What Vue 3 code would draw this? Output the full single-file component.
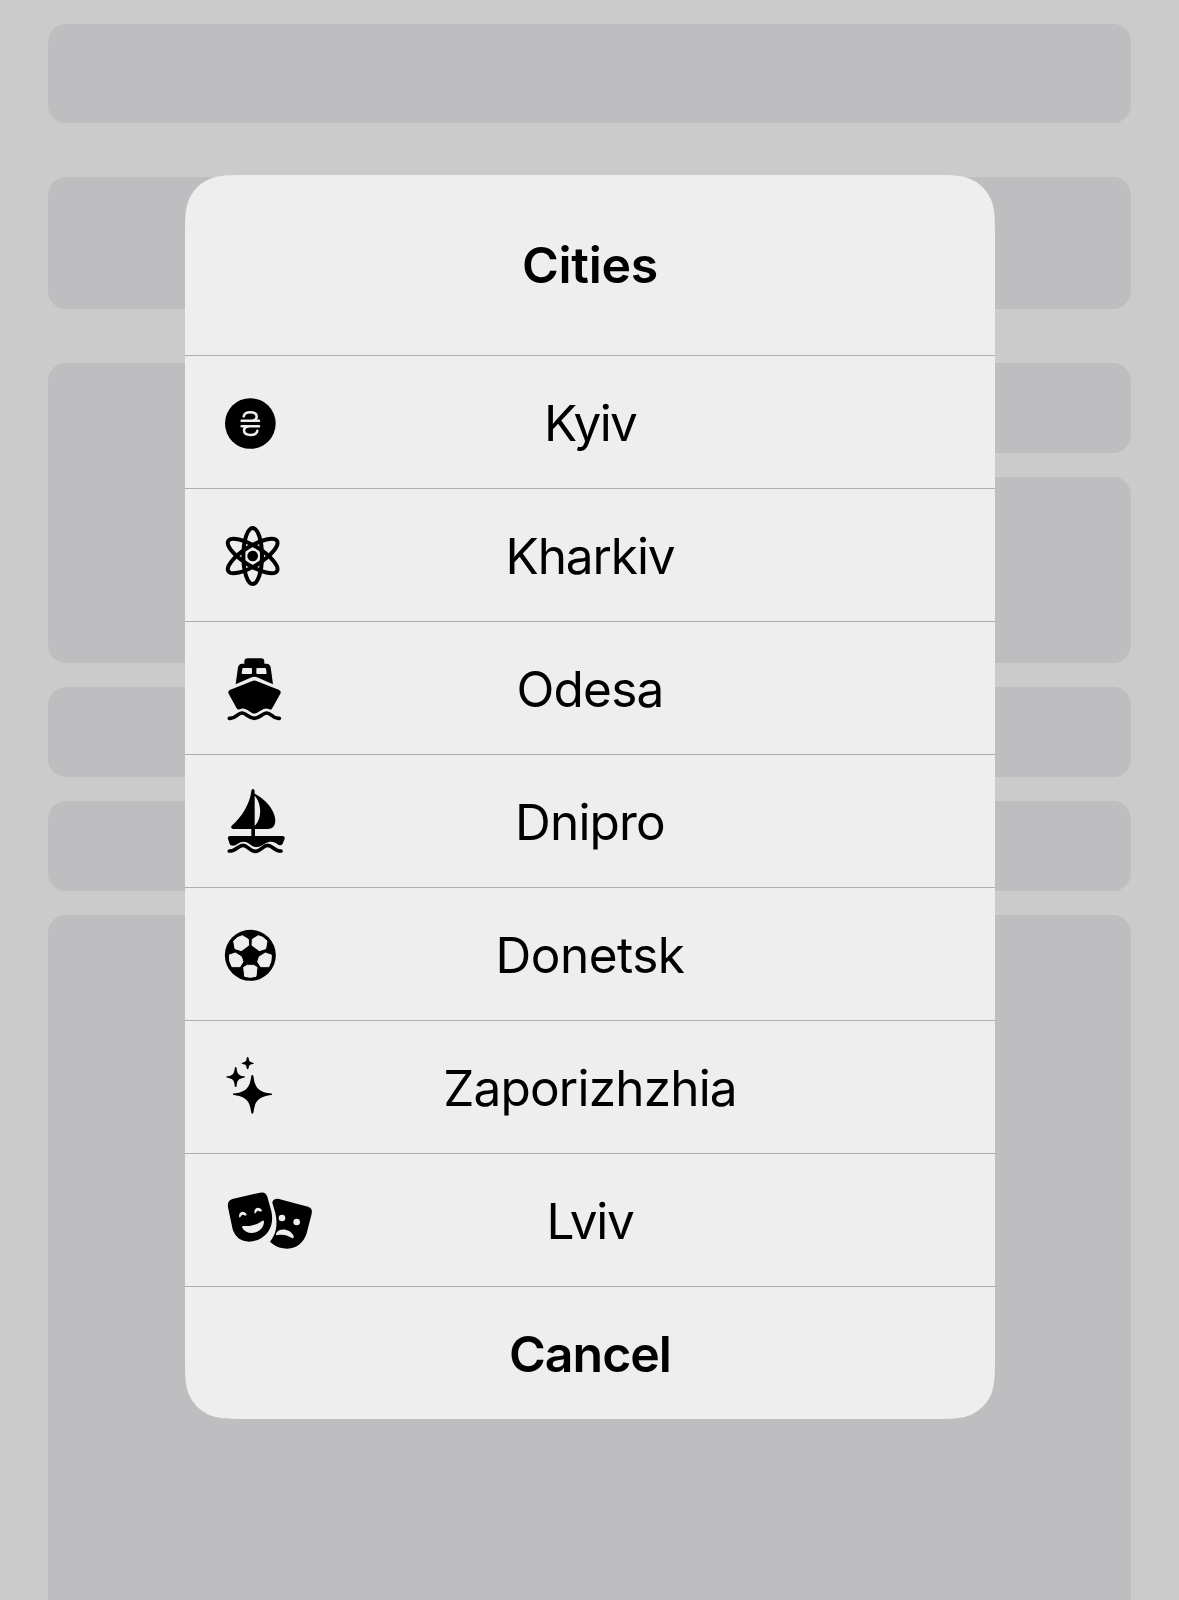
<script setup>
const cities = [
  { name: 'Kyiv', icon: 'hryvnia', view: '0 -87 240 396', tracking: '-1.7px' },
  { name: 'Kharkiv', icon: 'atom', view: '0 -78 240 396', tracking: '-1.1px' },
  { name: 'Odesa', icon: 'ferry', view: '0 -78 240 396', tracking: '-0.75px' },
  { name: 'Dnipro', icon: 'sailboat', view: '0 -75 240 396', tracking: '-0.8px' },
  { name: 'Donetsk', icon: 'football', view: '0 -81 240 396', tracking: '-0.5px' },
  { name: 'Zaporizhzhia', icon: 'sparkles', view: '0 -81 240 396', tracking: '-0.8px' },
  { name: 'Lviv', icon: 'masks', view: '-15 -78 315 396', tracking: '-1.35px' },
]
</script>

<template>
  <div class="screen">
    <div class="backdrop">
      <div class="card search"></div>
      <div class="card banner"></div>
      <div class="split">
        <div class="card"></div>
        <div class="stack">
          <div class="card short"></div>
          <div class="card rest"></div>
        </div>
      </div>
      <div class="card short gap"></div>
      <div class="card short gap"></div>
      <div class="card tall gap"></div>
    </div>

    <div class="alert" role="dialog">
      <h1 class="title">Cities</h1>
      <button v-for="c in cities" :key="c.name" class="row">
        <svg class="icon" :class="{ wide: c.icon === 'masks' }" :viewBox="c.view">
          <g v-if="c.icon === 'hryvnia'">
            <circle cx="106" cy="115.500" r="76" />
            <g class="line light">
              <path d="M86 94C88 86 95 82 105 82C117 82 125 87 125 95C125 101 121 105 114 107" />
              <path d="M99 124C91 126 87 130 87 136C87 145 95 150 107 150C118 150 125 146 127 137" />
              <path d="M80 107.500H132M80 124H132" />
            </g>
          </g>
          <g v-else-if="c.icon === 'atom'">
            <g class="line orbit">
              <ellipse cx="113" cy="123" rx="28" ry="84" />
              <ellipse cx="113" cy="123" rx="29" ry="86" transform="rotate(58 113 123)" />
              <ellipse cx="113" cy="123" rx="29" ry="86" transform="rotate(-58 113 123)" />
            </g>
            <circle cx="113" cy="123" r="16" />
          </g>
          <g v-else-if="c.icon === 'ferry'">
            <path fill-rule="evenodd" d="M62 109L69 58Q71 48 81 47H88V41Q88 31 98 31H138Q148 31 148 41V47H155Q165 48 167 58L174 109L126 88Q118 84 110 88ZM85 60Q82 60 82 63L80 75Q80 78 83 78H108Q111 78 111 75V63Q111 60 108 60ZM127 60Q124 60 124 63V75Q124 78 127 78H152Q155 78 155 75L153 63Q153 60 150 60Z" />
            <path d="M112 99Q118 96 124 99L191 125Q200 129 196 137L172 180Q169 187 163 184Q151 178 140 186L125 195Q118 198 111 195L97 186Q86 178 74 184Q68 186 65 181L41 137Q37 129 46 125Z" />
            <path class="line wave" d="M43 211C62 214 68 194 81 195C95 196 101 211 118 211C135 211 141 196 155 195C168 194 174 214 193 211" />
          </g>
          <g v-else-if="c.icon === 'sailboat'">
            <path fill-rule="evenodd" d="M109 33Q109 27 114 27Q118 27 119 34V41C147 54 181 89 181 122Q181 146 157 147H120V168H109V147H54Q45 145 50 137C81 111 105 70 109 33ZM119 47V138C143 113 139 69 119 47Z" />
            <path d="M45 168H202Q211 168 209 176L203 191Q199 198 191 195C175 182 162 184 152 190C139 198 133 202 122 201C108 200 101 185 86 185C72 184 66 197 53 197Q46 197 44 192L39 176Q37 168 45 168Z" />
            <path class="line wave" d="M43 213C61 215 70 196 84 196C98 196 104 214 121 214C138 214 144 196 158 196C172 196 180 215 198 213" />
          </g>
          <g v-else-if="c.icon === 'football'">
            <circle cx="106" cy="121" r="76.500" />
            <g class="patch">
              <path d="M82 62L100 73L101 91L79 107L60 101L56 78Q67 65 82 62Z" />
              <path d="M130 62L112 73L111 91L133 107L152 101L156 78Q145 65 130 62Z" />
              <path d="M43 120L61 114L79 125L84 140L75 155L51 155Q42 142 43 120Z" />
              <path d="M169 120L151 114L133 125L128 140L137 155L161 155Q170 142 169 120Z" />
              <path d="M86 157L96 151H116L126 157L123 184Q106 190 89 184Z" />
            </g>
          </g>
          <g v-else-if="c.icon === 'sparkles'">
            <path d="M112 81C115 81 115 83 116 89C120 117 130 131 163 136C170 137 171 137 171 139C171 141 170 141 163 142C130 147 120 161 116 189C115 195 115 197 112 197C109 197 109 195 108 189C104 161 94 147 61 142C55 141 54 141 54 139C54 137 55 137 61 136C94 131 104 117 108 89C109 83 109 81 112 81Z" />
            <path d="M62 57C65 57 65 60 65 63C67 77 70 82 86 85Q91 86 91 87Q91 88 86 89C70 92 67 97 65 111C65 114 65 117 62 117C59 117 59 114 59 111C57 97 54 92 38 89Q33 88 33 87Q33 86 38 85C54 82 57 77 59 63C59 60 59 57 62 57Z" />
            <path d="M98 27Q100 27 101 31C102 40 104 42 113 44Q117 45 117 46Q117 47 113 48C104 49 102 52 101 60Q100 64 98 64Q96 64 95 60C94 52 92 49 83 48Q79 47 79 46Q79 45 83 44C92 42 94 40 95 31Q96 27 98 27Z" />
          </g>
          <g v-else>
            <path d="M37 57L120 38Q137 34 142 50L154 94C162 130 150 164 113 180C78 193 48 180 38 148L24 82Q21 62 37 57Z" />
            <path d="M167 57Q174 55 185 59L264 80Q279 85 275 101L260 160C249 193 224 211 189 205Q165 200 150 185C168 163 174 137 166 99L157 68Q158 59 167 57Z" />
            <g class="face">
              <path d="M57 109C57 97 66 93 74 97Q80 100 80 105Q76 108 71 105Q65 103 62 110Q57 115 57 109Z" />
              <path d="M103 97C103 85 112 81 120 85Q126 88 126 93Q122 96 117 93Q111 91 108 98Q103 103 103 97Z" />
              <path d="M71 138C93 139 113 133 127 122Q132 120 132 126C130 160 83 171 67 144Q64 137 71 138Z" />
              <circle cx="186" cy="114" r="10" />
              <circle cx="230" cy="126" r="10" />
              <path d="M168 161C174 143 210 143 221 168Q223 176 216 174C202 165 188 162 173 165Q167 167 168 161Z" />
            </g>
          </g>
        </svg>
        <span class="label" :style="{ letterSpacing: c.tracking }">{{ c.name }}</span>
      </button>
      <button class="row cancel"><span class="label">Cancel</span></button>
    </div>
  </div>
</template>

<style>
body {
  margin: 0;
  background: #cbcbcb;
}
</style>

<style scoped>
.screen {
  display: grid;
  width: 1179px;
  height: 1600px;
  overflow: hidden;
  background: #cbcbcb;
  font-family: Inter, "Liberation Sans", sans-serif;
  color: #000;
}
.backdrop {
  grid-area: 1 / 1;
  display: flex;
  flex-direction: column;
  padding: 24px 48px 0;
  height: 1600px;
  box-sizing: border-box;
  overflow: hidden;
}
.card {
  flex: none;
  border-radius: 18px;
  background: #bebec0;
}
.search { height: 99px; }
.banner { height: 132px; margin-top: 54px; }
.split {
  display: grid;
  flex: none;
  grid-template-columns: 1fr 1fr;
  gap: 24px;
  height: 300px;
  margin-top: 54px;
}
.stack {
  display: flex;
  flex-direction: column;
  gap: 24px;
}
.short { height: 90px; }
.rest { flex: 1; }
.gap { margin-top: 24px; }
.tall { height: 760px; }

.alert {
  grid-area: 1 / 1;
  z-index: 1;
  align-self: start;
  margin: 175px 0 0 185px;
  width: 810px;
  height: 1244px;
  background: #eee;
  clip-path: path("M64 0H746C764 0 773.500 0 782 2.750L783.500 3.150C794.300 7.100 802.900 15.700 806.850 26.500L807.250 28C810 36.500 810 46 810 64V1180C810 1198 810 1207.500 807.250 1216L806.850 1217.500C802.900 1228.300 794.300 1236.900 783.500 1240.850L782 1241.250C773.500 1244 764 1244 746 1244H64C46 1244 36.500 1244 28 1241.250L26.500 1240.850C15.700 1236.900 7.100 1228.300 3.150 1217.500L2.750 1216C0 1207.500 0 1198 0 1180V64C0 46 0 36.500 2.750 28L3.150 26.500C7.100 15.700 15.700 7.100 26.500 3.150L28 2.750C36.500 0 46 0 64 0Z");
}
.title {
  display: flex;
  align-items: center;
  justify-content: center;
  height: 180px;
  margin: 0;
  font-size: 50px;
  font-weight: 600;
  letter-spacing: -0.3px;
}
.row {
  display: grid;
  align-items: center;
  width: 100%;
  height: 133px;
  padding: 0;
  border: 0;
  border-top: 1px solid #aeaeb0;
  background: none;
  color: inherit;
  font-family: inherit;
  font-size: 49.500px;
  font-weight: 400;
}
.label {
  grid-area: 1 / 1;
  padding-top: 2px;
  text-align: center;
}
.cancel {
  font-size: 50px;
  font-weight: 600;
  letter-spacing: -1px;
}
.icon {
  grid-area: 1 / 1;
  width: 80px;
  height: 132px;
  margin-left: 30px;
}
.wide { width: 105px; }
.line {
  fill: none;
  stroke: #000;
  stroke-linecap: round;
}
.light { stroke: #eee; stroke-width: 7.500; }
.orbit { stroke-width: 12; }
.wave { stroke-width: 11; }
.patch {
  fill: #eee;
  stroke: #eee;
  stroke-width: 3;
  stroke-linejoin: round;
}
.face { fill: #eee; }
</style>
